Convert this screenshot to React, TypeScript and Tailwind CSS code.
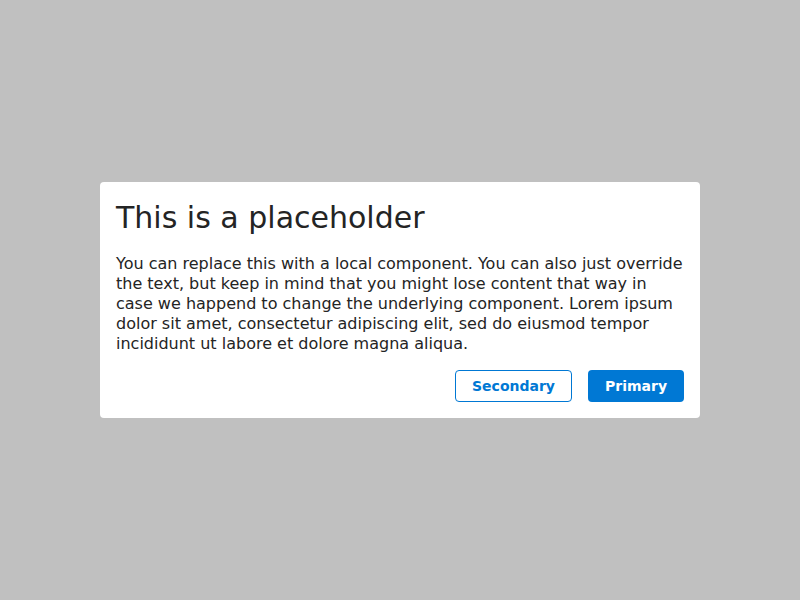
export default function App() {
  return (
    <div className="w-[800px] h-[600px] bg-[#c0c0c0] flex items-center justify-center font-['DejaVu_Sans',sans-serif]">
      <div className="w-[600px] bg-white rounded-[4px] p-4 flex flex-col gap-4">
        <h1 className="text-[30px] leading-[40px] text-[#242424]">This is a placeholder</h1>
        <p className="text-[16px] leading-[20px] text-[#242424]">
          You can replace this with a local component. You can also just override the text, but keep in mind that you
          might lose content that way in case we happend to change the underlying component. Lorem ipsum dolor sit
          amet, consectetur adipiscing elit, sed do eiusmod tempor incididunt ut labore et dolore magna aliqua.
        </p>
        <div className="flex justify-end gap-4">
          <button className="w-[117px] h-8 rounded-[4px] border border-[#0078d4] bg-white text-[#0078d4] text-[14px] font-bold">
            Secondary
          </button>
          <button className="w-[96px] h-8 rounded-[4px] bg-[#0078d4] text-white text-[14px] font-bold">
            Primary
          </button>
        </div>
      </div>
    </div>
  )
}
